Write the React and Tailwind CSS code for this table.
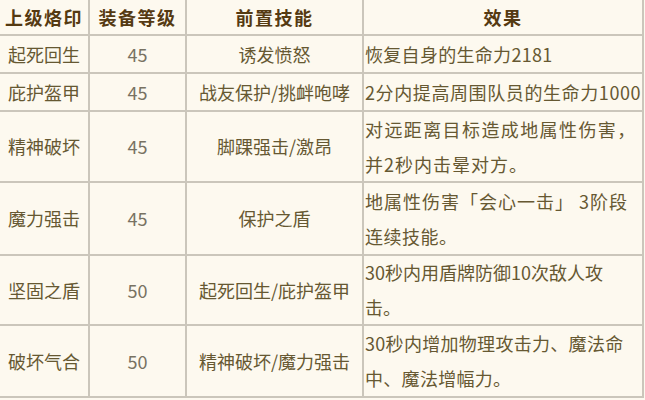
import React from "react";

const rows = [
  { a: "起死回生", b: "45", c: "诱发愤怒", d: [["恢复自身的生命力2181", "tracking-[0.3px]"]], h: "h-[36px]" },
  { a: "庇护盔甲", b: "45", c: "战友保护/挑衅咆哮", d: [["2分内提高周围队员的生命力1000", "tracking-[0.6px]"]], h: "h-[36px]" },
  { a: "精神破坏", b: "45", c: "脚踝强击/激昂", d: [["对远距离目标造成地属性伤害，", "tracking-[1.4px]"], ["并2秒内击晕对方。", "tracking-[1px]"]], h: "h-[69px]" },
  { a: "魔力强击", b: "45", c: "保护之盾", d: [["地属性伤害「会心一击」 3阶段", "tracking-[1px]"], ["连续技能。", "tracking-[0.5px]"]], h: "h-[71px]" },
  { a: "坚固之盾", b: "50", c: "起死回生/庇护盔甲", d: [["30秒内用盾牌防御10次敌人攻", "tracking-[0px]"], ["击。", "tracking-[0px]"]], h: "h-[68px]" },
  { a: "破坏气合", b: "50", c: "精神破坏/魔力强击", d: [["30秒内增加物理攻击力、魔法命", "tracking-[0.3px]"], ["中、魔法增幅力。", "tracking-[0.3px]"]], h: "h-[70px]" },
];

export default function App() {
  return (
    <div className="w-[645px] h-[400px] bg-[#fdf9ef] overflow-hidden" style={{ fontFamily: '"Noto Sans CJK SC", "Noto Sans", sans-serif' }}>
      <div className="grid grid-cols-[88px_95px_175px_278px] gap-[2px] bg-[#cbc6bb] w-[644px] pr-[2px] pb-[2px]">
        {["上级烙印", "装备等级", "前置技能", "效果"].map((t) => (
          <div key={t} className="h-[34px] bg-[#fdf9ef] flex items-center justify-center text-[18px] font-bold text-[#553a12] tracking-[1.5px]">
            {t}
          </div>
        ))}
        {rows.map((r) => (
          <React.Fragment key={r.a}>
            <div className={`${r.h} bg-[#fdf9ef] flex items-center justify-center text-[18px] text-[#665832]`}>{r.a}</div>
            <div className={`${r.h} bg-[#fdf9ef] flex items-center justify-center text-[18px] text-[#787262]`}>{r.b}</div>
            <div className={`${r.h} bg-[#fdf9ef] flex items-center justify-center text-[18px] text-[#665832] whitespace-nowrap`}>{r.c}</div>
            <div className={`${r.h} bg-[#fdf9ef] flex flex-col justify-center pl-[1px] text-[18px] leading-[35px] text-[#665832] whitespace-nowrap`}>
              {r.d.map(([l, t]) => (
                <span key={l} className={t}>{l}</span>
              ))}
            </div>
          </React.Fragment>
        ))}
      </div>
    </div>
  );
}
